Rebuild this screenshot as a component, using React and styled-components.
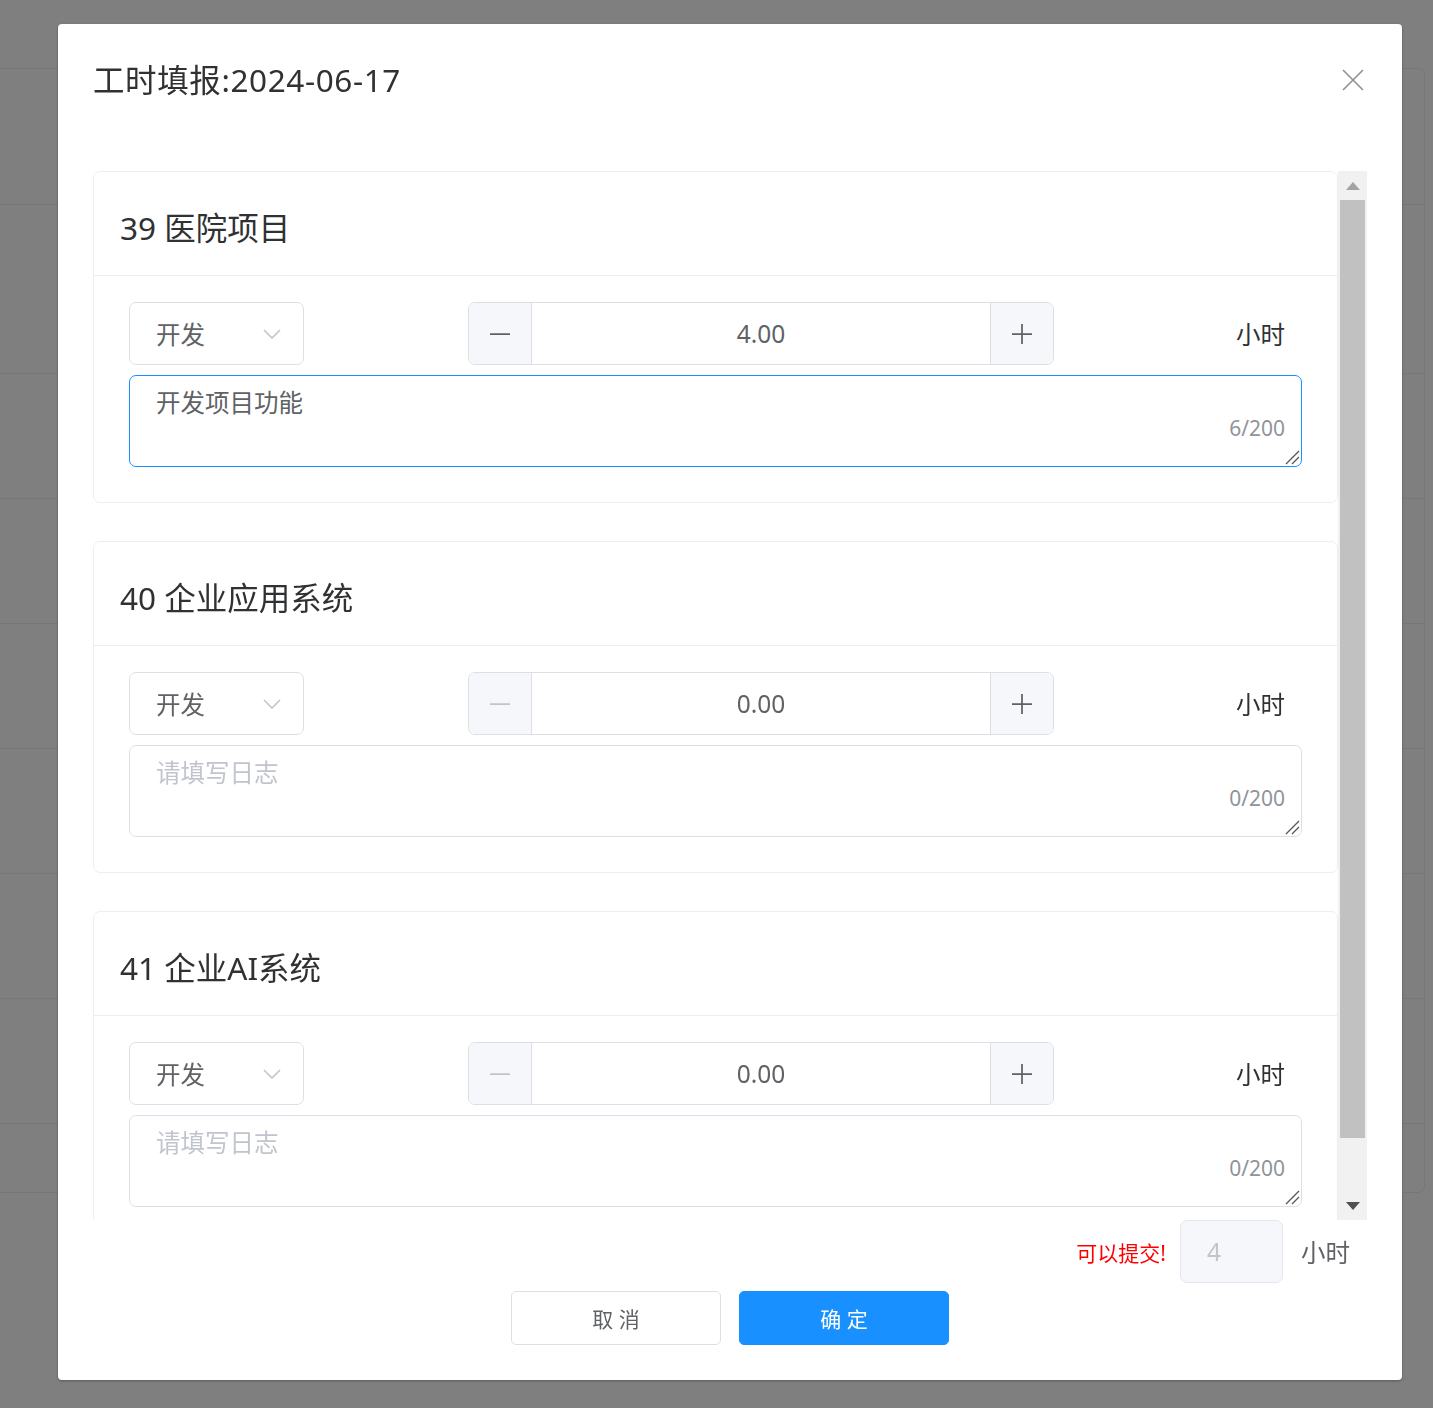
import React from 'react';
import styled, { createGlobalStyle } from 'styled-components';

const GlobalStyle = createGlobalStyle`
  html, body {
    margin: 0;
    padding: 0;
  }
  body {
    font-family: "Noto Sans", "Noto Sans CJK SC", sans-serif;
    background: #fff;
  }
  * {
    box-sizing: border-box;
  }
`;

// page behind the dialog
const Page = styled.div`
  height: 1408px;
  padding-top: 68px;
  overflow: hidden;
`;

const Panel = styled.div`
  margin-right: 8px;
  border: 1px solid #ebeef5;
  border-left: none;
  border-radius: 0 7px 7px 0;
`;

const PanelRow = styled.div`
  height: ${(p) => p.h}px;
  border-bottom: 1px solid #ebeef5;

  &:last-child {
    border-bottom: none;
  }
`;

const Mask = styled.div`
  position: fixed;
  inset: 0;
  background: rgba(0, 0, 0, 0.5);
`;

const Dialog = styled.div`
  position: fixed;
  top: 24px;
  left: 58px;
  width: 1344px;
  background: #fff;
  border-radius: 4px;
  box-shadow: 0 1px 3px rgba(0, 0, 0, 0.3);
`;

const Header = styled.div`
  position: relative;
  padding: 35px 35px 17.5px;
`;

const Title = styled.span`
  display: block;
  font-size: 31.5px;
  line-height: 42px;
  letter-spacing: 0.6px;
  color: #303133;
`;

const CloseButton = styled.button`
  position: absolute;
  top: 42px;
  right: 35px;
  width: 28px;
  height: 28px;
  padding: 0;
  border: none;
  background: transparent;
  cursor: pointer;
  display: flex;
  align-items: center;
  justify-content: center;
`;

const Body = styled.div`
  padding: 52.5px 35px 0;
`;

const ScrollFrame = styled.div`
  display: flex;
  height: 1049px;
`;

const Viewport = styled.div`
  flex: 1;
  min-width: 0;
  overflow: hidden;
`;

// classic scrollbar next to the card list
const Rail = styled.div`
  width: 29px;
  flex: none;
  background: #f1f1f1;
  display: flex;
  flex-direction: column;
`;

const RailButton = styled.div`
  height: 29px;
  flex: none;
  display: flex;
  align-items: center;
  justify-content: center;
`;

const RailTrack = styled.div`
  flex: 1;
  padding: 0 2px;
`;

const Thumb = styled.div`
  height: ${(p) => p.size}px;
  background: #c1c1c1;
`;

const Card = styled.div`
  border: 1px solid #ebeef5;
  border-radius: 7px;
  background: #fff;
  margin-bottom: 38px;
  overflow: hidden;
`;

const CardHeader = styled.div`
  padding: 35px 26px 27px;
  border-bottom: 1px solid #ebeef5;
  font-size: 31.5px;
  line-height: 41px;
  color: #303133;
`;

const CardBody = styled.div`
  padding: 26px 35px 35px;
`;

const FieldRow = styled.div`
  display: flex;
  align-items: center;
`;

const Select = styled.div`
  width: 175px;
  height: 63px;
  border: 1px solid #dcdfe6;
  border-radius: 7px;
  padding: 0 22px 0 26px;
  display: flex;
  align-items: center;
  justify-content: space-between;
  font-size: 24.5px;
  color: #606266;
`;

const Stepper = styled.div`
  margin-left: 164px;
  width: 586px;
  height: 63px;
  border: 1px solid #dcdfe6;
  border-radius: 7px;
  display: flex;
  overflow: hidden;
`;

const StepButton = styled.div`
  width: 63px;
  flex: none;
  background: #f5f7fa;
  display: flex;
  align-items: center;
  justify-content: center;
  color: ${(p) => (p.disabled ? '#c0c4cc' : '#606266')};
  border-${(p) => (p.side === 'left' ? 'right' : 'left')}: 1px solid #dcdfe6;
`;

const StepValue = styled.div`
  flex: 1;
  display: flex;
  align-items: center;
  justify-content: center;
  font-size: 24.5px;
  color: #606266;
`;

const Unit = styled.div`
  flex: 1;
  text-align: right;
  padding-right: 17px;
  font-size: 24.5px;
  color: #303133;
`;

const LogBox = styled.div`
  position: relative;
  margin-top: 10px;
`;

const LogInput = styled.textarea`
  display: block;
  width: 100%;
  height: 92px;
  padding: 8.75px 26px;
  border: 1px solid ${(p) => (p.$focused ? '#1890ff' : '#dcdfe6')};
  border-radius: 7px;
  font-family: inherit;
  font-size: 24.5px;
  line-height: 36.75px;
  color: #606266;
  resize: none;
  outline: none;

  &::placeholder {
    color: #c0c4cc;
  }
`;

const Counter = styled.span`
  position: absolute;
  right: 17px;
  bottom: 21px;
  font-size: 21px;
  line-height: 36px;
  color: #909399;
  background: #fff;
`;

const Grip = styled.svg`
  position: absolute;
  right: 2px;
  bottom: 2px;
`;

const Summary = styled.div`
  display: flex;
  align-items: center;
  justify-content: flex-end;
  height: 63px;
`;

const Hint = styled.span`
  font-size: 21px;
  color: #ff0000;
  margin-right: 14px;
`;

const TotalInput = styled.div`
  width: 103px;
  height: 63px;
  border: 1px solid #e4e7ed;
  border-radius: 7px;
  background: #f5f7fa;
  padding: 0 26px;
  display: flex;
  align-items: center;
  font-size: 24.5px;
  color: #c0c4cc;
`;

const TotalUnit = styled.span`
  margin: 0 17px 0 18px;
  font-size: 24.5px;
  color: #606266;
`;

const Footer = styled.div`
  padding: 8px 35px 35px;
  display: flex;
  justify-content: center;
  gap: 18px;
`;

const Button = styled.button`
  width: 210px;
  height: 54px;
  border-radius: 5px;
  font-family: inherit;
  font-size: 21px;
  cursor: pointer;
  border: 1px solid ${(p) => (p.$primary ? '#1890ff' : '#dcdfe6')};
  background: ${(p) => (p.$primary ? '#1890ff' : '#fff')};
  color: ${(p) => (p.$primary ? '#fff' : '#606266')};
`;

const panelRows = [136, 169, 125, 125, 125, 125, 125, 125, 68];

const projects = [
  { id: 39, name: '医院项目', type: '开发', hours: 4, log: '开发项目功能', focused: true },
  { id: 40, name: '企业应用系统', type: '开发', hours: 0, log: '' },
  { id: 41, name: '企业AI系统', type: '开发', hours: 0, log: '' },
];

const Chevron = () => (
  <svg width="18" height="10" viewBox="0 0 18 10">
    <path d="M1 1l8 8 8-8" fill="none" stroke="#c0c4cc" strokeWidth="1.6" />
  </svg>
);

const Minus = () => (
  <svg width="22" height="22" viewBox="0 0 22 22">
    <path d="M1 11h20" stroke="currentColor" strokeWidth="1.75" />
  </svg>
);

const Plus = () => (
  <svg width="22" height="22" viewBox="0 0 22 22">
    <path d="M1 11h20M11 1v20" stroke="currentColor" strokeWidth="1.75" />
  </svg>
);

const Arrow = ({ up, color }) => (
  <svg width="14" height="8" viewBox="0 0 14 8">
    <path d={up ? 'M7 0L14 8H0z' : 'M0 0h14L7 8z'} fill={color} />
  </svg>
);

const ProjectCard = ({ project }) => (
  <Card>
    <CardHeader>
      {project.id} {project.name}
    </CardHeader>
    <CardBody>
      <FieldRow>
        <Select>
          <span>{project.type}</span>
          <Chevron />
        </Select>
        <Stepper>
          <StepButton side="left" disabled={project.hours <= 0}>
            <Minus />
          </StepButton>
          <StepValue>{project.hours.toFixed(2)}</StepValue>
          <StepButton side="right">
            <Plus />
          </StepButton>
        </Stepper>
        <Unit>小时</Unit>
      </FieldRow>
      <LogBox>
        <LogInput
          $focused={project.focused}
          defaultValue={project.log}
          placeholder="请填写日志"
          readOnly
        />
        <Counter>{project.log.length}/200</Counter>
        <Grip width="15" height="15" viewBox="0 0 15 15">
          <path d="M14 1L1 14M14 7L7 14" stroke="#555" strokeWidth="1.3" />
        </Grip>
      </LogBox>
    </CardBody>
  </Card>
);

const App = () => {
  const total = projects.reduce((sum, p) => sum + p.hours, 0);

  return (
    <>
      <GlobalStyle />
      <Page>
        <Panel>
          {panelRows.map((h, i) => (
            <PanelRow key={i} h={h} />
          ))}
        </Panel>
      </Page>
      <Mask />
      <Dialog>
        <Header>
          <Title>工时填报:2024-06-17</Title>
          <CloseButton aria-label="关闭">
            <svg width="22" height="22" viewBox="0 0 22 22">
              <path d="M1 1l20 20M21 1L1 21" stroke="#909399" strokeWidth="1.75" />
            </svg>
          </CloseButton>
        </Header>
        <Body>
          <ScrollFrame>
            <Viewport>
              {projects.map((p) => (
                <ProjectCard key={p.id} project={p} />
              ))}
            </Viewport>
            <Rail>
              <RailButton>
                <Arrow up color="#a3a3a3" />
              </RailButton>
              <RailTrack>
                <Thumb size={938} />
              </RailTrack>
              <RailButton>
                <Arrow color="#505050" />
              </RailButton>
            </Rail>
          </ScrollFrame>
          <Summary>
            <Hint>可以提交!</Hint>
            <TotalInput>{total}</TotalInput>
            <TotalUnit>小时</TotalUnit>
          </Summary>
        </Body>
        <Footer>
          <Button>取 消</Button>
          <Button $primary>确 定</Button>
        </Footer>
      </Dialog>
    </>
  );
};

export default App;
